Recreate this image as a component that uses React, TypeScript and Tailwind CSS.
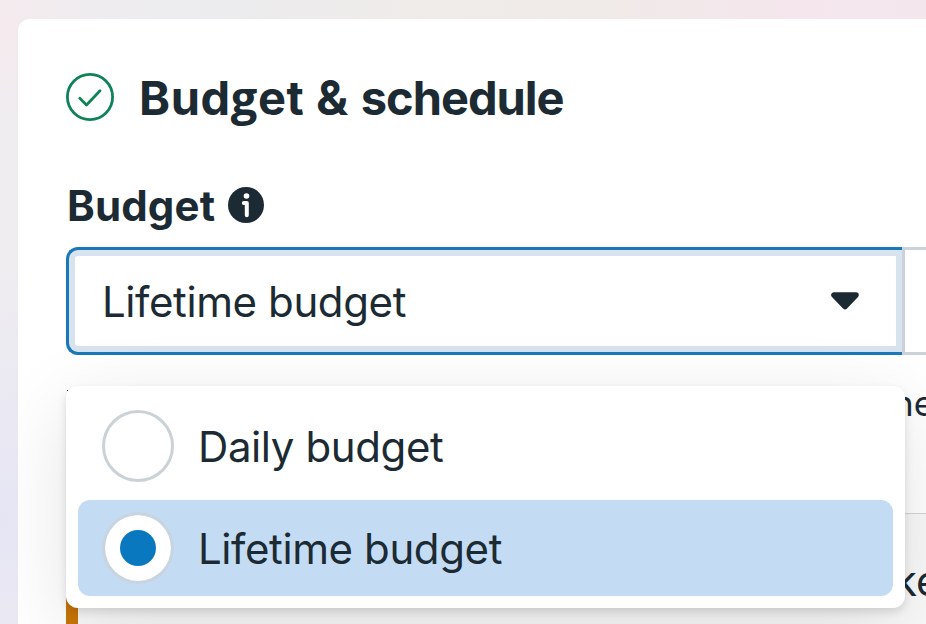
import React from "react";

function CheckBadge() {
  return (
    <svg className="h-12 w-12 shrink-0" viewBox="0 0 48 48" fill="none" stroke="#0f8258" strokeLinecap="round" strokeLinejoin="round">
      <circle cx="24" cy="24" r="22.6" strokeWidth="2.8" />
      <path d="M13.8 25.3L20.5 32L34 17.8" strokeWidth="2.8" />
    </svg>
  );
}

function InfoIcon() {
  return (
    <svg className="h-9 w-9 shrink-0" viewBox="0 0 36 36">
      <circle cx="18" cy="18" r="18" fill="#1c2b33" />
      <circle cx="18.5" cy="9" r="2.8" fill="#fff" />
      <path d="M15.8 16H18.8V28.3" fill="none" stroke="#fff" strokeWidth="4" strokeLinecap="round" strokeLinejoin="round" />
    </svg>
  );
}

function Option({ label, selected }: { label: string; selected?: boolean }) {
  return (
    <div className={selected ? "flex h-24 items-center rounded-[12px] bg-[#c4dcf3] pl-6" : "flex h-24 items-center rounded-[12px] pl-6"}>
      <span className={selected ? "flex h-[72px] w-[72px] items-center justify-center rounded-full border-[3px] border-[#cbd2d9]/70 bg-white bg-clip-padding" : "flex h-[72px] w-[72px] items-center justify-center rounded-full border-[3px] border-[#cbd2d6]"}>
        {selected && <span className="h-9 w-9 rounded-full bg-[#0a78be]" />}
      </span>
      <span className="ml-6 pt-[2px] text-[42px] leading-[52px] tracking-[-0.4px]">{label}</span>
    </div>
  );
}

export default function App() {
  return (
    <div className="h-[624px] w-[926px] overflow-hidden bg-[radial-gradient(circle_at_0px_30px,#f5eaee_0px,transparent_100px),radial-gradient(circle_at_0px_520px,#e6e5f4_0px,transparent_260px),linear-gradient(90deg,#efedf0_0%,#ecebed_25%,#efece9_48%,#f0eae8_65%,#f4e6ec_85%,#f3e7ed_100%)] pl-[18px] pt-[19px] font-['Inter','Liberation_Sans',sans-serif] text-[#1c2b33]">
      <main className="h-[605px] w-[908px] overflow-hidden rounded-tl-[12px] bg-white pl-12 pt-[54px]">
        <header className="flex h-12 items-center gap-[25px]">
          <CheckBadge />
          <h1 className="whitespace-nowrap text-[47px] font-bold leading-[56px] tracking-[0.6px]">
            Bud<span className="font-['Open_Sans'] font-bold">g</span>et <span className="text-[48px]">&amp;</span> <span className="tracking-[-1px]">schedule</span>
          </h1>
        </header>
        <div className="mt-[60px] flex h-12 items-center gap-[13px] pl-[1px]">
          <h2 className="pt-[2px] text-[42px] font-bold leading-[48px] tracking-[0.15px]">Budget</h2>
          <InfoIcon />
        </div>
        <div className="relative mt-[18px] w-[860px]">
          <div className="flex h-[108px]">
            <div className="flex w-[836px] items-center justify-between rounded-l-[12px] border-y-[3px] border-l-[3px] border-[#1878b8] bg-[#d7e4f0] p-[6px]">
              <div className="flex h-full w-full items-center justify-between rounded-l-[3px] bg-white pl-[27px] pr-[37px]">
                <span className="pt-[2px] text-[42px] leading-[52px] tracking-[-0.4px]">Lifetime budget</span>
                <svg className="h-[18px] w-7" viewBox="0 0 28 18">
                  <path d="M3 3H25L14 14.5Z" fill="#1c2b33" stroke="#1c2b33" strokeWidth="5.6" strokeLinejoin="round" />
                </svg>
              </div>
            </div>
            <div className="flex-1 border-y-[3px] border-l-[3px] border-[#cbd2d9]" />
          </div>
          <p className="mt-[27px] h-[42px] whitespace-nowrap pl-[827px] text-[35px] leading-[42px]">ne</p>
          <div className="mt-[89px] h-[120px] w-[900px] border-l-[12px] border-t border-[#c97508] border-t-[#d5d5d5] bg-[#f9f9f9] pl-[816px] pt-[41px] text-[42px] leading-[52px]">ke</div>
          <div className="absolute left-[1px] top-[143px] h-px w-px bg-[#1c2b33]" />
          <div className="absolute left-0 top-[139px] h-[222px] w-[839px] rounded-[12px] bg-white p-3 shadow-[0_4px_8px_rgba(0,0,0,0.12),0_20px_80px_rgba(0,0,0,0.11)]">
            <div className="flex flex-col gap-[6px]">
              <Option label="Daily budget" />
              <Option label="Lifetime budget" selected />
            </div>
          </div>
        </div>
      </main>
    </div>
  );
}
